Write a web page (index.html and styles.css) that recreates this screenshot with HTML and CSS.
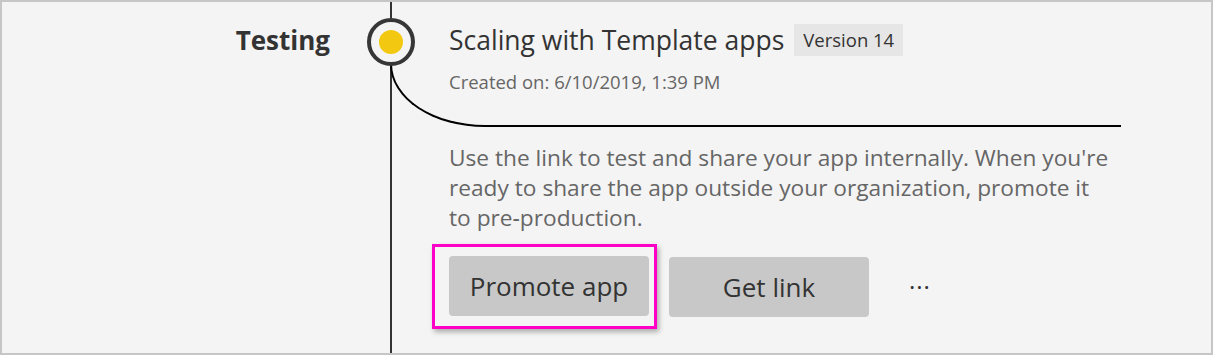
FILE: index.html
```html
<!DOCTYPE html>
<html>
<head>
<meta charset="utf-8">
<link rel="stylesheet" href="styles.css">
</head>
<body>
<div class="frame">
  <div class="stage"><span class="stage-name">Testing</span></div>
  <div class="rail">
    <div class="rail-line rail-top"></div>
    <div class="node"><div class="dot"></div></div>
    <div class="rail-line rail-rest"></div>
    <div class="connector"></div>
  </div>
  <div class="content">
    <div class="title-row">
      <span class="title">Scaling with Template apps</span>
      <span class="badge">Version 14</span>
    </div>
    <div class="created">Created on: 6/10/2019, 1:39 PM</div>
    <p class="desc">Use the link to test and share your app internally. When you're ready to share the app outside your organization, promote it to pre&#8209;production.</p>
    <div class="actions">
      <div class="highlight"><button class="btn">Promote app</button></div>
      <button class="btn">Get link</button>
      <span class="more">&middot;&middot;&middot;</span>
    </div>
  </div>
</div>
</body>
</html>
```
FILE: styles.css
```css
html, body {
  margin: 0;
  padding: 0;
  background: #f4f4f4;
}
.frame {
  box-sizing: border-box;
  width: 1213px;
  height: 355px;
  border: 2px solid #c6c6c6;
  background: #f4f4f4;
  display: flex;
  font-family: "Open Sans", "Noto Sans", sans-serif;
  overflow: hidden;
}
.stage {
  width: 365px;
  flex: none;
  box-sizing: border-box;
  padding-right: 37px;
  padding-top: 22px;
  text-align: right;
}
.stage-name {
  font-size: 26px;
  font-weight: 700;
  color: #333;
  line-height: 32px;
}
.rail {
  position: relative;
  width: 48px;
  flex: none;
  display: flex;
  flex-direction: column;
  align-items: center;
}
.rail-line {
  width: 2px;
  background: #333;
}
.rail-top {
  height: 16px;
}
.rail-rest {
  flex: 1;
}
.node {
  position: relative;
  z-index: 1;
  box-sizing: border-box;
  width: 48px;
  height: 48px;
  border: 4px solid #363636;
  border-radius: 50%;
  background: #f4f4f4;
  display: flex;
  align-items: center;
  justify-content: center;
}
.dot {
  width: 24px;
  height: 24px;
  border-radius: 50%;
  background: #f2c811;
}
.connector {
  position: absolute;
  left: 23px;
  top: 62px;
  box-sizing: border-box;
  width: 731px;
  height: 63px;
  border-left: 2px solid #000;
  border-bottom: 2px solid #000;
  border-bottom-left-radius: 95px 63px;
}
.content {
  flex: 1;
  padding-left: 34px;
  padding-top: 22px;
}
.title-row {
  display: flex;
  align-items: center;
  height: 32px;
}
.title {
  font-size: 26.5px;
  color: #333;
  line-height: 32px;
}
.badge {
  margin-left: 10px;
  height: 32px;
  line-height: 32px;
  padding: 0 9px;
  background: #e6e6e6;
  font-size: 18.5px;
  color: #333;
}
.created {
  margin-top: 14px;
  font-size: 18.5px;
  line-height: 24px;
  color: #666;
}
.desc {
  margin: 49px 0 0 0;
  width: 663px;
  font-size: 22.7px;
  line-height: 30px;
  color: #666;
}
.actions {
  display: flex;
  align-items: center;
  margin-top: 11px;
}
.highlight {
  margin-left: -17px;
  border: 3px solid #ff00c8;
  padding: 9px 5px 10px 14px;
  box-shadow: 2px 3px 5px rgba(0, 0, 0, 0.3);
  display: flex;
}
.btn {
  width: 200px;
  height: 60px;
  border: none;
  border-radius: 4px;
  background: #c8c8c8;
  color: #333;
  font-family: "Open Sans", "Noto Sans", sans-serif;
  font-size: 26px;
  padding: 0;
}
.highlight + .btn {
  margin-left: 12px;
}
.more {
  margin-left: 40px;
  font-size: 24px;
  color: #333;
  letter-spacing: 1px;
}
```
